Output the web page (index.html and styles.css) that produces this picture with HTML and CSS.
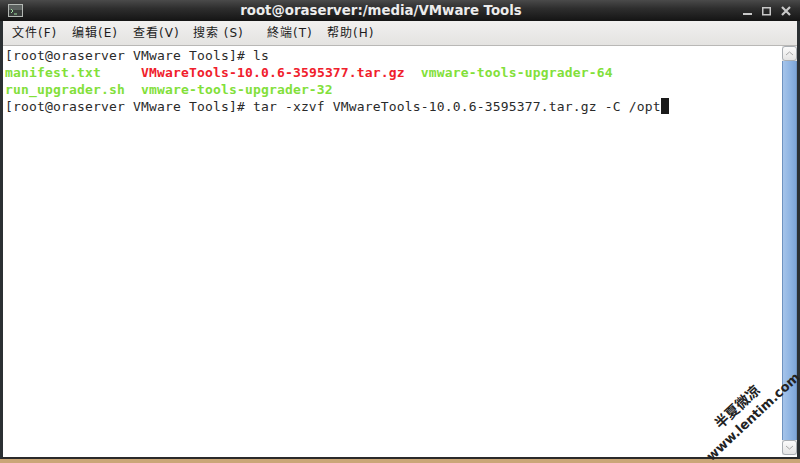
FILE: index.html
```html
<!DOCTYPE html>
<html lang="zh">
<head>
<meta charset="utf-8">
<title>root@oraserver:/media/VMware Tools</title>
<link rel="stylesheet" href="styles.css">
</head>
<body>
<div class="window">
  <header class="titlebar">
    <svg class="app-icon" width="15" height="13" viewBox="0 0 15 13"><rect x="0.5" y="0.5" width="14" height="12" fill="#3a3d3c" stroke="#b4b8b4"/><rect x="1" y="1" width="13" height="5" fill="#5c615f"/><path d="M3 5l2 2-2 2" fill="none" stroke="#9fe0a0"/><path d="M6 10h3" stroke="#9fe0a0"/></svg>
    <div class="title">root@oraserver:/media/VMware Tools</div>
    <div class="controls">
      <svg width="9" height="10" viewBox="0 0 9 10"><rect x="0" y="7" width="9" height="2" fill="#c8c8c8"/></svg>
      <svg width="9" height="10" viewBox="0 0 9 10"><rect x="0.75" y="1.75" width="7.5" height="7" fill="none" stroke="#c8c8c8" stroke-width="1.5"/></svg>
      <svg width="10" height="10" viewBox="0 0 10 10"><path d="M1 1l8 8M9 1l-8 8" stroke="#c8c8c8" stroke-width="2.2"/></svg>
    </div>
  </header>
  <nav class="menubar">
    <span class="menu m1">文件(F)</span>
    <span class="menu m2">编辑(E)</span>
    <span class="menu m3">查看(V)</span>
    <span class="menu m4">搜索 (S)</span>
    <span class="menu m5">終端(T)</span>
    <span class="menu m6">帮助(H)</span>
  </nav>
  <main class="content">
    <div class="terminal">
      <div class="line">[root@oraserver VMware Tools]# ls</div>
      <div class="line"><span class="green">manifest.txt     </span><span class="red">VMwareTools-10.0.6-3595377.tar.gz</span>  <span class="green">vmware-tools-upgrader-64</span></div>
      <div class="line"><span class="green">run_upgrader.sh  vmware-tools-upgrader-32</span></div>
      <div class="line">[root@oraserver VMware Tools]# tar -xzvf VMwareTools-10.0.6-3595377.tar.gz -C /opt<span class="cursor"></span></div>
    </div>
    <div class="scrollbar">
      <div class="arrow"><svg width="9" height="5" viewBox="0 0 9 5"><path d="M1 4l3.5-3L8 4" fill="none" stroke="#a8a8a8"/></svg></div>
      <div class="thumb"></div>
      <div class="arrow"><svg width="9" height="5" viewBox="0 0 9 5"><path d="M1 1l3.5 3L8 1" fill="none" stroke="#a8a8a8"/></svg></div>
    </div>
    <div class="watermark wm-cn">半夏微凉</div>
    <div class="watermark wm-en">www.lentim.com</div>
  </main>
</div>
<div class="desktop"></div>
</body>
</html>
```
FILE: styles.css
```css
* { box-sizing: border-box; }
html, body { margin: 0; height: 463px; overflow: hidden; background: #fff; }
body { display: flex; flex-direction: column; }
.window { height: 459px; flex: none; display: flex; flex-direction: column; border-left: 3px solid #2b3033; border-right: 3px solid #2b3033; border-bottom: 2px solid #2a2a2a; background: #fff; }
.titlebar { height: 21px; flex: none; margin: 0 -3px; padding: 0 8px; display: flex; align-items: center; background: linear-gradient(#4a4a4a, #2e2e2e 40%, #141414); }
.app-icon { flex: none; }
.title { flex: 1; text-align: center; font: bold 13.33px/21px "DejaVu Sans", sans-serif; color: #ececec; padding-right: 4px; white-space: nowrap; }
.controls { display: flex; gap: 10px; padding-right: 1px; }
.menubar { height: 25px; flex: none; background: linear-gradient(#f1f0ef, #e4e3e1); border-bottom: 1px solid #b9b8b6; display: flex; align-items: center; padding-left: 9px; font: 12px/25px "DejaVu Sans", "Noto Sans CJK SC", sans-serif; letter-spacing: 1px; color: #1c1c1c; }
.menu { white-space: nowrap; flex: none; }
.m1 { width: 60px; }
.m2 { width: 61px; }
.m3 { width: 60px; }
.m4 { width: 74px; }
.m5 { width: 60px; }
.content { flex: 1; position: relative; display: flex; min-height: 0; }
.terminal { flex: 1; padding-top: 1px; font: 13px/17px "DejaVu Sans Mono", monospace; letter-spacing: 0.17px; color: #2a2a2a; }
.line { height: 17px; padding-left: 2px; white-space: pre; }
.green { color: #82e03a; font-weight: bold; }
.red { color: #f0202c; font-weight: bold; }
.cursor { display: inline-block; width: 8px; height: 16px; background: #1a1a1a; vertical-align: -3px; }
.scrollbar { width: 15px; flex: none; display: flex; flex-direction: column; background: #e8e8e8; margin-bottom: 2px; }
.arrow { height: 15px; flex: none; display: flex; align-items: center; justify-content: center; background: linear-gradient(#fbfbfb, #e4e4e4); border: 1px solid #a9aeb3; border-radius: 3px; }
.thumb { flex: 1; background: linear-gradient(90deg, #a5c4ea, #8db3e2 60%, #7ea6d8); border-left: 1px solid #6f93c0; border-right: 1px solid #6f93c0; }
.watermark { position: absolute; transform: rotate(-43deg); white-space: nowrap; color: #222; }
.wm-cn { left: 706px; top: 353px; font: bold 14px/15px "Noto Sans CJK SC", sans-serif; }
.wm-en { left: 689px; top: 363px; font: bold 13px/15px "DejaVu Sans", sans-serif; }
.desktop { flex: 1; background: #caa678; }
```
